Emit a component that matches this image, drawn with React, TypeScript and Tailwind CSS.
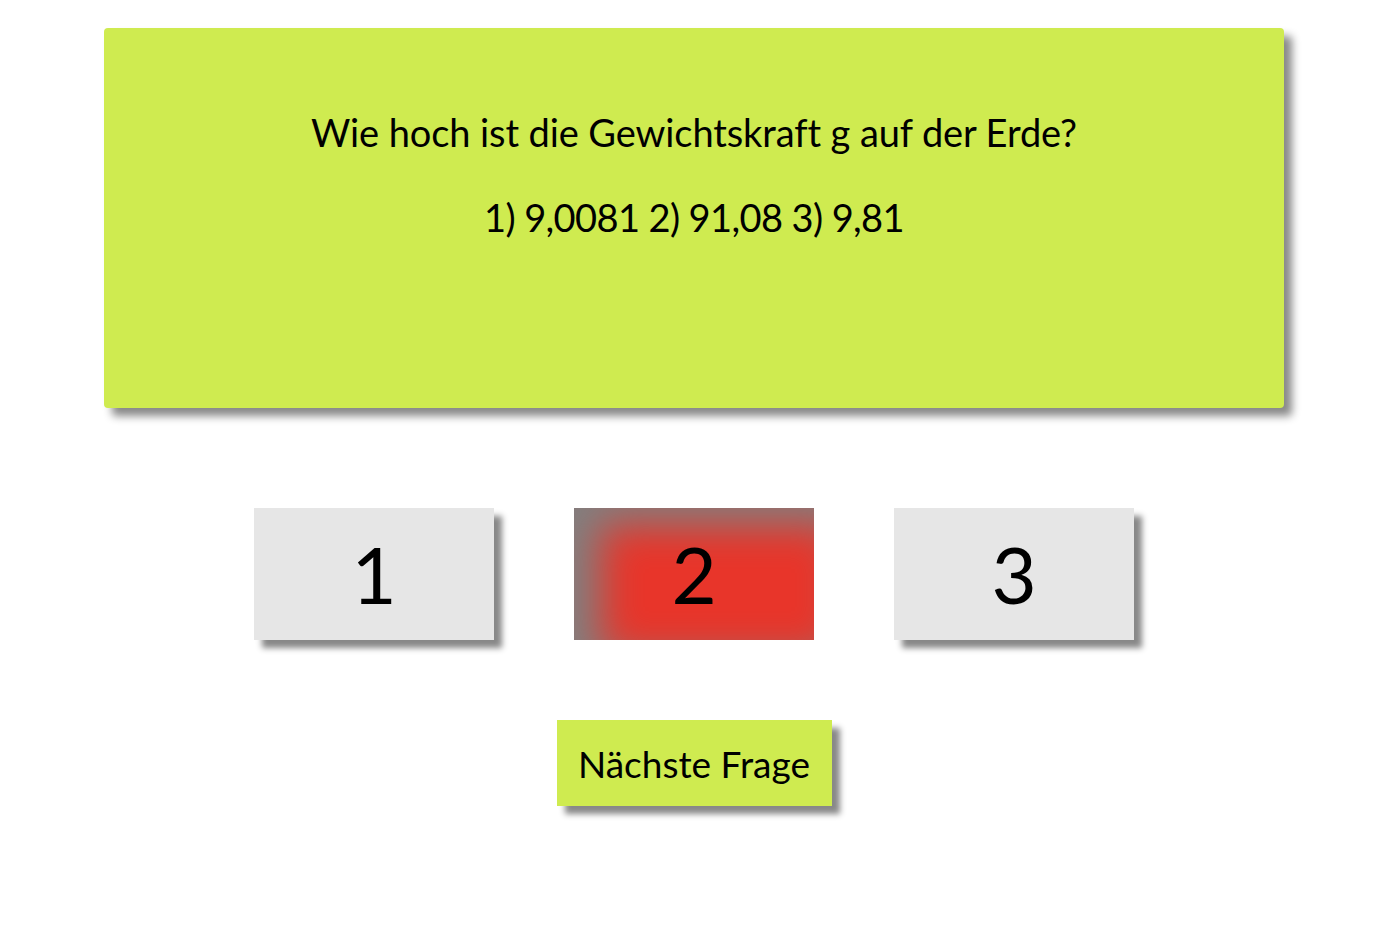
import React from "react";

export default function App() {
  return (
    <div className="w-[1396px] h-[940px] bg-white overflow-hidden" style={{ fontFamily: "Lato, 'Open Sans', sans-serif" }}>
      <div className="w-[1388px] pt-[28px] flex flex-col items-center">
        <div className="w-[1180px] h-[380px] bg-[#cfeb50] rounded-[4px] shadow-[8px_8px_8px_#888] flex flex-col items-center pt-[85px] text-black text-[38px] leading-none">
          <p className="tracking-[-0.1px]">Wie hoch ist die Gewichtskraft g auf der Erde?</p>
          <p className="mt-[47px] tracking-[-0.6px]">1) 9,0081 2) 91,08 3) 9,81</p>
        </div>
        <div className="mt-[100px] flex gap-[80px]">
          <div className="w-[240px] h-[132px] bg-[#e6e6e6] shadow-[8px_8px_6px_#888] flex items-center justify-center text-[78px] leading-none text-black">1</div>
          <div className="w-[240px] h-[132px] bg-[#e8352a] shadow-[inset_26px_16px_40px_#808080] flex items-center justify-center text-[78px] leading-none text-black">2</div>
          <div className="w-[240px] h-[132px] bg-[#e6e6e6] shadow-[8px_8px_6px_#888] flex items-center justify-center text-[78px] leading-none text-black">3</div>
        </div>
        <div className="mt-[80px] w-[275px] h-[86px] bg-[#cfeb50] shadow-[8px_8px_6px_#888] flex items-center justify-center text-[37px] leading-none text-black">
          Nächste Frage
        </div>
      </div>
    </div>
  );
}
